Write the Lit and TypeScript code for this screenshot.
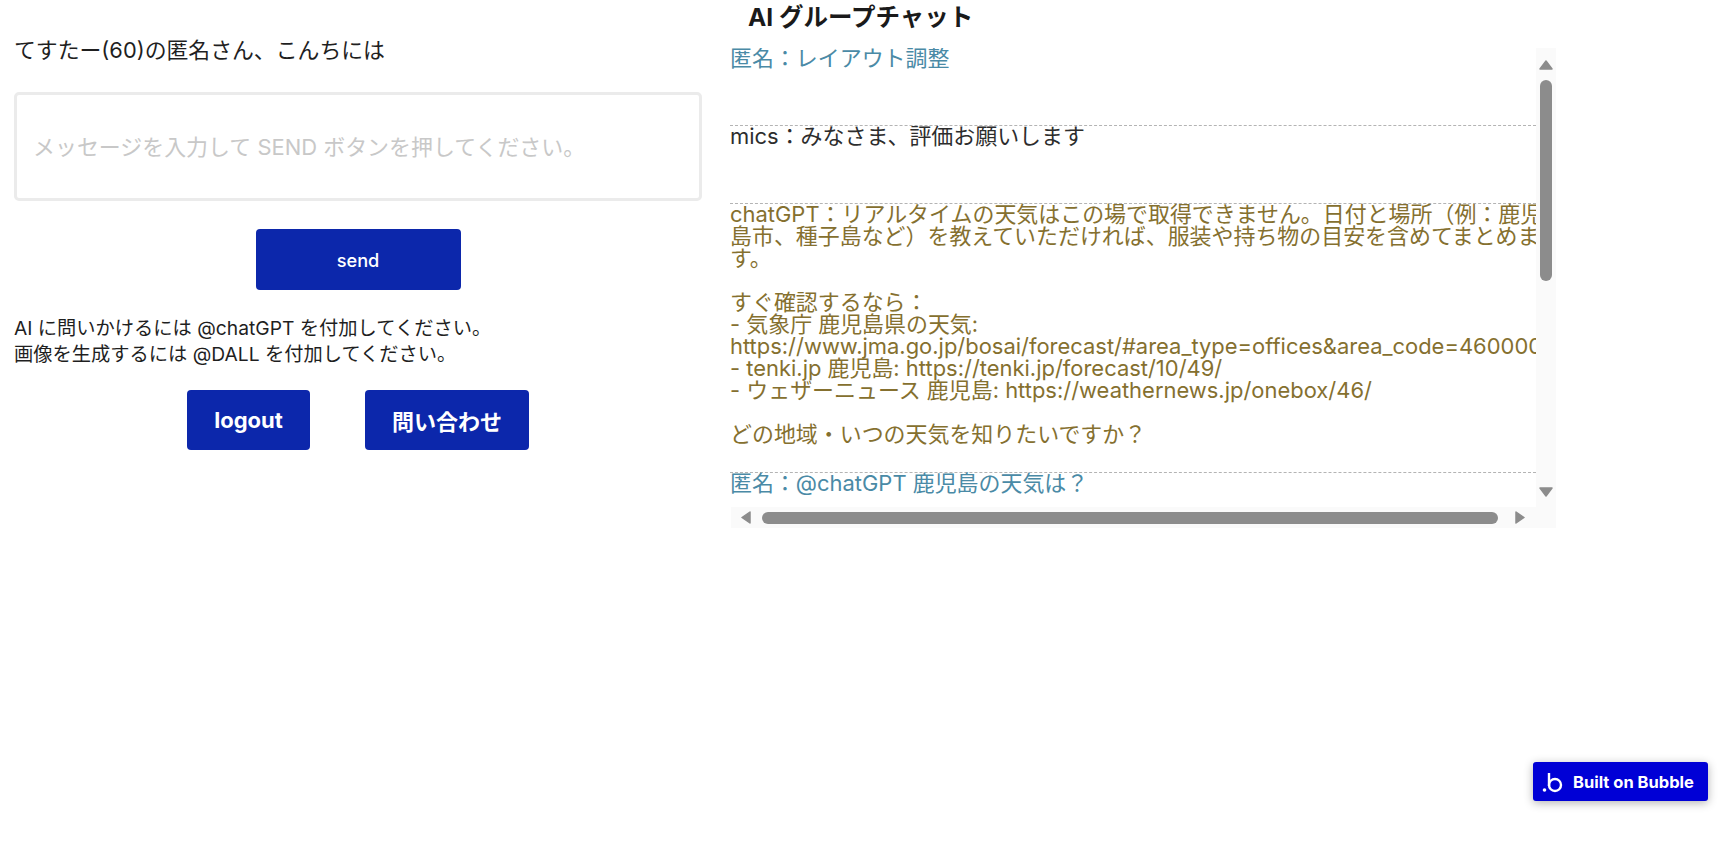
import { LitElement, html, css } from "lit";
import { customElement } from "lit/decorators.js";

const arrow = (d: string, w: number, h: number) => html`<svg class="arrow" width=${w} height=${h} viewBox="0 0 ${w} ${h}"><path d=${d} fill="#8c8c8c" stroke="#8c8c8c" stroke-width="1.5" stroke-linejoin="round"/></svg>`;

@customElement("app-root")
export class AppRoot extends LitElement {
  static styles = css`
    :host { display: block; width: 1722px; height: 848px; position: relative; overflow: hidden; background: #fff;
      font-family: Inter, "Noto Sans CJK JP", sans-serif; color: #1f1f1f; }
    .page { display: flex; align-items: flex-start; }
    .left { width: 688px; margin-left: 14px; padding-top: 35px; display: flex; flex-direction: column; }
    .greet { font-size: 21.85px; line-height: 30px; height: 30px; white-space: nowrap; }
    .input { box-sizing: border-box; width: 688px; height: 109px; margin-top: 27px; border: 3px solid #ebebeb; border-radius: 5px;
      padding: 0 16px; font: 21.95px Inter, "Noto Sans CJK JP", sans-serif; outline: none; background: #fff; }
    .input::placeholder { color: #c8c8c8; opacity: 1; }
    .btn { border: 0; background: #0c27ab; color: #fff; border-radius: 4px; font-family: inherit; padding: 0; display: flex; align-items: center; justify-content: center; }
    .send { width: 205px; height: 61px; margin: 28px auto 0; padding-top: 1px; font-size: 18.2px; font-weight: 500; }
    .help { margin-top: 25px; font-size: 19.25px; line-height: 26px; white-space: nowrap; }
    .actions { display: flex; justify-content: center; gap: 55px; margin-top: 23px; }
    .actions .btn { height: 60px; font-size: 22px; font-weight: 700; }
    .logout { width: 123px; }
    .contact { width: 164px; }
    .right { margin-left: 29px; width: 825px; }
    .title { height: 48px; line-height: 34px; margin-left: 17px; font-size: 24.5px; font-weight: 700; color: #1a1a1a; white-space: nowrap; }
    .chat { display: grid; grid-template-columns: 805px 20px; grid-template-rows: 459px 21px; }
    .log { overflow: hidden; font-size: 21.95px; line-height: 22px; margin-left: -1px; }
    .msg { box-sizing: border-box; border-top: 1px dashed #b4b4b4; min-height: 78px; padding-bottom: 26px; white-space: pre; }
    .msg:first-child { border-top: 0; }
    .txt { margin: -1px 0 1px; }
    .user { color: #4a8aa6; }
    .other { color: #2d2d2d; }
    .bot { color: #85702f; }
    .vbar { background: #fafafa; display: flex; flex-direction: column; align-items: center; padding: 12px 0 10px; box-sizing: border-box; }
    .vthumb { width: 12px; height: 201px; margin-top: 10px; border-radius: 6px; background: #8c8c8c; }
    .vbar .end { margin-top: auto; }
    .hbar { grid-column: 1 / 3; background: #fafafa; display: flex; align-items: center; padding-left: 10px; }
    .hthumb { width: 736px; height: 12px; margin-left: 11px; border-radius: 6px; background: #8c8c8c; }
    .hbar .end { margin-left: 17px; }
    .arrow { display: block; flex: none; }
    .badge { position: absolute; left: 1533px; top: 762px; width: 175px; height: 39px; box-sizing: border-box; background: #0000d6; border-radius: 3px;
      box-shadow: 0 2px 10px rgba(0,0,0,.3); color: #fff; display: flex; align-items: center; gap: 7px; padding-left: 9px; font-size: 16.5px; font-weight: 700; white-space: nowrap; }
  `;

  render() {
    return html`
      <div class="page">
        <section class="left">
          <div class="greet">てすたー(60)の匿名さん、こんちには</div>
          <input class="input" placeholder="メッセージを入力して SEND ボタンを押してください。" />
          <button class="btn send">send</button>
          <div class="help">AI に問いかけるには @chatGPT を付加してください。<br />画像を生成するには @DALL を付加してください。</div>
          <div class="actions">
            <button class="btn logout">logout</button>
            <button class="btn contact">問い合わせ</button>
          </div>
        </section>
        <section class="right">
          <div class="title">AI グループチャット</div>
          <div class="chat">
            <div class="log">
              <div class="msg user"><div class="txt">匿名：レイアウト調整</div></div>
              <div class="msg other"><div class="txt">mics：みなさま、評価お願いします</div></div>
              <div class="msg bot"><div class="txt">chatGPT：リアルタイムの天気はこの場で取得できません。日付と場所（例：鹿児
島市、種子島など）を教えていただければ、服装や持ち物の目安を含めてまとめま
す。

すぐ確認するなら：
- 気象庁 鹿児島県の天気:
https://www.jma.go.jp/bosai/forecast/#area_type=offices&area_code=460000
- tenki.jp 鹿児島: https://tenki.jp/forecast/10/49/
- ウェザーニュース 鹿児島: https://weathernews.jp/onebox/46/

どの地域・いつの天気を知りたいですか？</div></div>
              <div class="msg user"><div class="txt">匿名：@chatGPT 鹿児島の天気は？</div></div>
            </div>
            <div class="vbar">
              ${arrow("M7 1 L13 9 L1 9 Z", 14, 10)}
              <div class="vthumb"></div>
              <div class="end">${arrow("M1 1 L13 1 L7 9 Z", 14, 10)}</div>
            </div>
            <div class="hbar">
              ${arrow("M9 1 L9 12 L1 6.5 Z", 10, 13)}
              <div class="hthumb"></div>
              <div class="end">${arrow("M1 1 L9 6.5 L1 12 Z", 10, 13)}</div>
            </div>
          </div>
        </section>
      </div>
      <div class="badge">
        <svg width="24" height="24" viewBox="0 0 24 24" fill="none" stroke="#fff" stroke-width="2.4">
          <circle cx="2.5" cy="20" r="1.8" fill="#fff" stroke="none"/>
          <path d="M7 3v13"/><circle cx="13" cy="15" r="6"/>
        </svg>
        <span>Built on Bubble</span>
      </div>
    `;
  }
}
